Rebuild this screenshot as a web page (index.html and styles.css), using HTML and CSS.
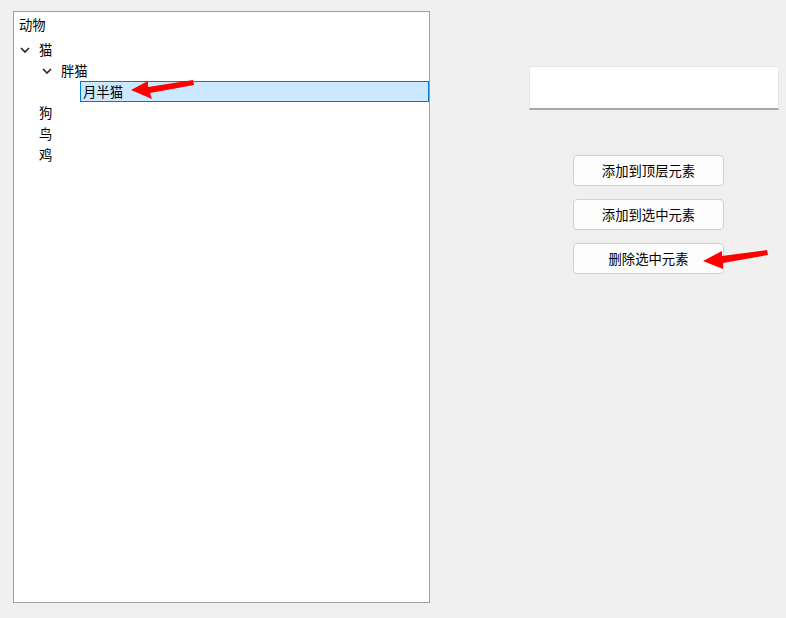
FILE: index.html
```html
<!DOCTYPE html>
<html lang="zh">
<head>
  <meta charset="UTF-8">
  <title>Tree</title>
  <link rel="stylesheet" href="styles.css">
</head>
<body>

  <div class="window">
    <div class="tree">
      <div class="tree-header">动物</div>

      <div class="row">
        <span class="indent" style="width: 0px"></span>
        <span class="chevron"><svg width="10" height="6" viewBox="0 0 10 6"><path d="M1 1 L5 5 L9 1" fill="none" stroke="#222" stroke-width="1.6"/></svg></span>
        <span class="label">猫</span>
      </div>
      <div class="row">
        <span class="indent" style="width: 22px"></span>
        <span class="chevron"><svg width="10" height="6" viewBox="0 0 10 6"><path d="M1 1 L5 5 L9 1" fill="none" stroke="#222" stroke-width="1.6"/></svg></span>
        <span class="label">胖猫</span>
      </div>
      <div class="row">
        <span class="indent" style="width: 44px"></span>
        <span class="chevron"></span>
        <span class="label selected">月半猫</span>
      </div>
      <div class="row">
        <span class="indent" style="width: 0px"></span>
        <span class="chevron"></span>
        <span class="label">狗</span>
      </div>
      <div class="row">
        <span class="indent" style="width: 0px"></span>
        <span class="chevron"></span>
        <span class="label">鸟</span>
      </div>
      <div class="row">
        <span class="indent" style="width: 0px"></span>
        <span class="chevron"></span>
        <span class="label">鸡</span>
      </div>
    </div>

    <div class="side">
      <div class="line-edit"></div>
      <div class="buttons">
        <button class="push-button">添加到顶层元素</button>
        <button class="push-button">添加到选中元素</button>
        <button class="push-button">删除选中元素</button>
      </div>
    </div>
  </div>

  <!-- annotation arrows drawn over the screenshot -->
  <svg class="arrows" width="786" height="618" viewBox="0 0 786 618">
    <polygon points="131,90 148,81 148,87 193,80 194,85 150,93 152,99" fill="#f00"/>
    <polygon points="703,261 722,251 722,256 767,250 768,255 723,263 723,269" fill="#f00"/>
  </svg>

</body>
</html>
```

FILE: styles.css
```css
body {
  margin: 0;
  font-family: "Noto Sans CJK SC", "Noto Sans", sans-serif;
  font-size: 13.33px;
  color: #000;
  background-color: #f0f0f0;
  height: 618px;
  overflow: hidden;
  position: relative;
}

.window {
  display: flex;
  padding: 11px 0 0 13px;
}

.tree {
  box-sizing: border-box;
  width: 417px;
  height: 592px;
  background-color: #fff;
  border: 1px solid #a0a0a0;
  padding-top: 1px;
}

.tree-header {
  height: 26px;
  line-height: 24px;
  padding-left: 5px;
}

.row {
  display: flex;
  height: 21px;
  align-items: stretch;
  padding-left: 1px;
}

.indent {
  flex: none;
}

.chevron {
  flex: none;
  width: 20px;
  display: flex;
  align-items: center;
  justify-content: center;
}

.label {
  flex: 1;
  line-height: 21px;
  padding-left: 4px;
}

.label.selected {
  background-color: #cce8ff;
  border: 1px solid #0078d7;
  line-height: 19px;
  padding-left: 2px;
  margin-left: 1px;
}

.side {
  margin-left: 99px;
  padding-top: 55px;
  width: 250px;
}

.line-edit {
  box-sizing: border-box;
  height: 44px;
  background-color: #fff;
  border: 1px solid #e6e6e6;
  border-bottom: 2px solid #a8a8a8;
}

.buttons {
  display: flex;
  flex-direction: column;
  gap: 13px;
  margin-top: 45px;
  margin-left: 44px;
  width: 151px;
}

.push-button {
  height: 31px;
  background-color: #fdfdfd;
  border: 1px solid #d0d0d0;
  border-radius: 4px;
  font-family: inherit;
  font-size: 13.33px;
  color: #000;
  padding: 0;
}

.arrows {
  position: absolute;
  top: 0;
  left: 0;
  pointer-events: none;
}
```
